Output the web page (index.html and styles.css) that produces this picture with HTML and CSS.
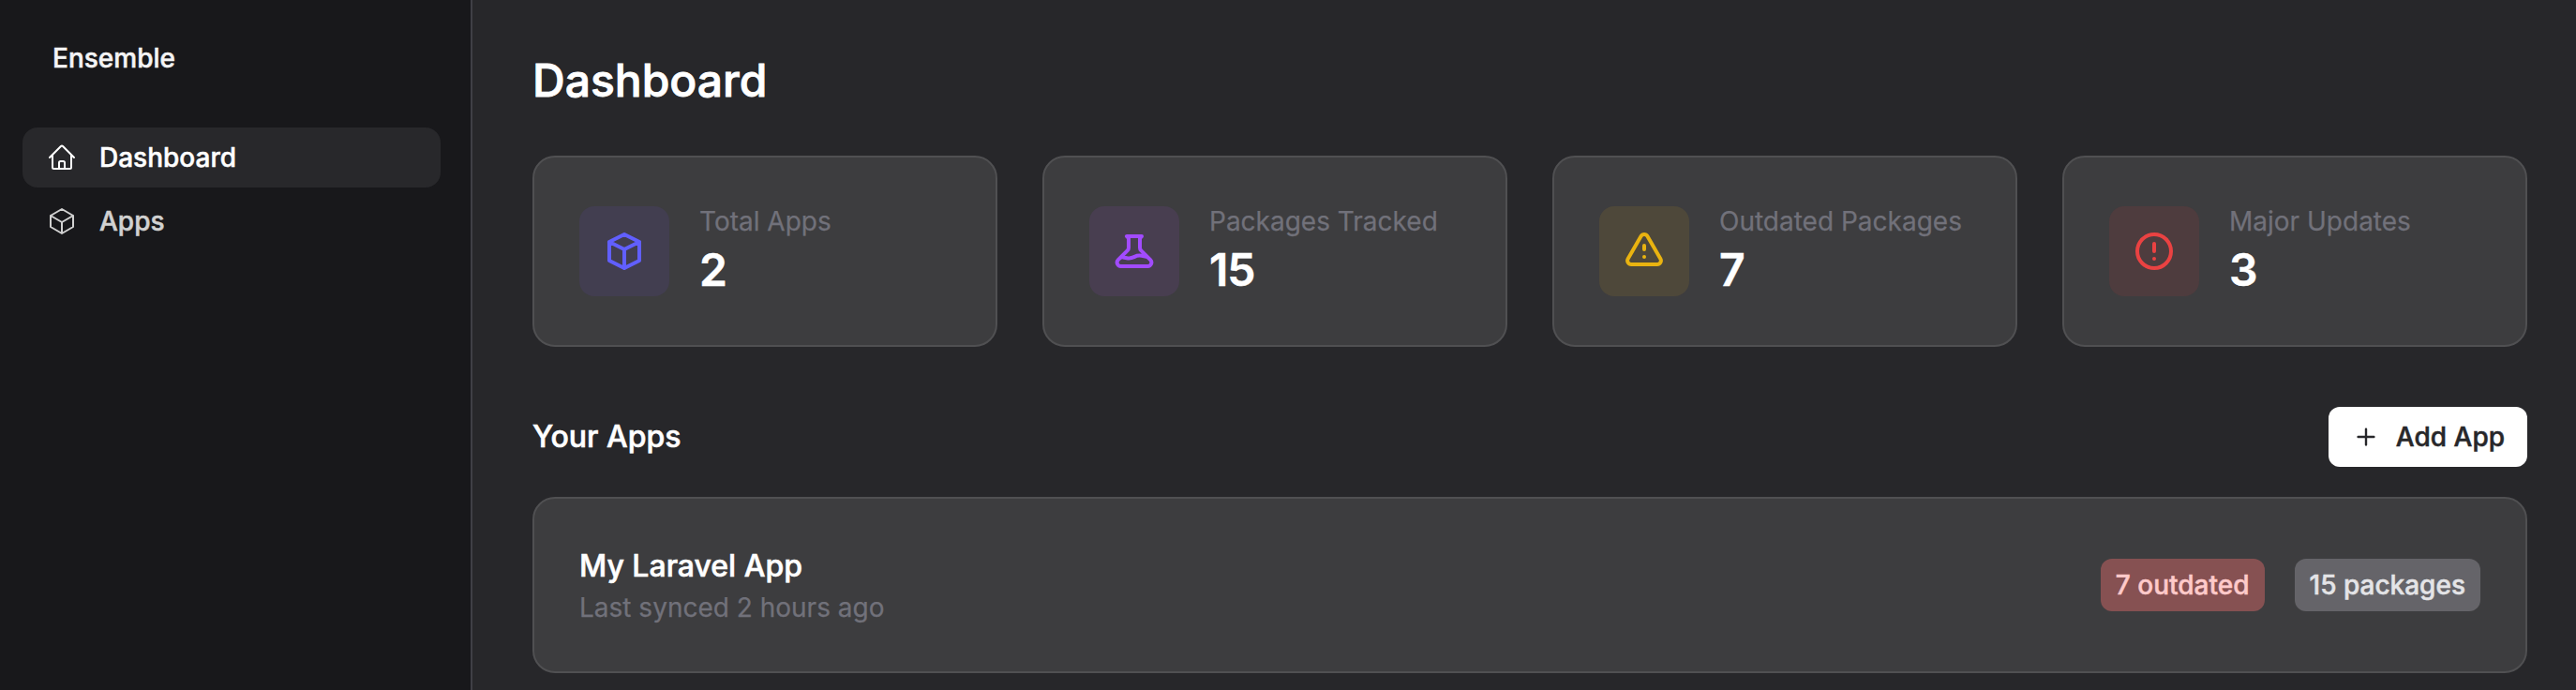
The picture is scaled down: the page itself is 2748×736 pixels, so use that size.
FILE: index.html
```html
<!DOCTYPE html>
<html lang="en">
<head>
<meta charset="utf-8">
<title>Dashboard - Ensemble</title>
<link rel="stylesheet" href="styles.css">
</head>
<body>
<div class="layout">
  <aside class="sidebar">
    <div class="brand">Ensemble</div>
    <nav class="nav">
      <a class="nav-item nav-item-current">
        <svg class="nav-icon" viewBox="0 0 24 24"><path d="m2.25 12 8.954-8.955c.44-.439 1.152-.439 1.591 0L21.75 12M4.5 9.75v10.125c0 .621.504 1.125 1.125 1.125H9.75v-4.875c0-.621.504-1.125 1.125-1.125h2.25c.621 0 1.125.504 1.125 1.125V21h4.125c.621 0 1.125-.504 1.125-1.125V9.75M8.25 21h8.25"/></svg>
        <span>Dashboard</span>
      </a>
      <a class="nav-item">
        <svg class="nav-icon" viewBox="0 0 24 24"><path d="m21 7.5-9-5.25L3 7.5m18 0-9 5.25m9-5.25v9l-9 5.25M3 7.5l9 5.25M3 7.5v9l9 5.25m0-9v9"/></svg>
        <span>Apps</span>
      </a>
    </nav>
  </aside>
  <main class="main">
    <h1 class="title">Dashboard</h1>
    <section class="stats">
      <div class="card stat">
        <div class="tile tile-indigo"><svg class="tile-icon" viewBox="0 0 24 24"><path d="M20 7l-8-4-8 4m16 0l-8 4m8-4v10l-8 4m0-10L4 7m8 4v10M4 7v10l8 4"/></svg></div>
        <div><div class="stat-label">Total Apps</div><div class="stat-value">2</div></div>
      </div>
      <div class="card stat">
        <div class="tile tile-purple"><svg class="tile-icon" viewBox="0 0 24 24"><path d="M19.428 15.428a2 2 0 00-1.022-.547l-2.387-.477a6 6 0 00-3.86.517l-.318.158a6 6 0 01-3.86.517L6.05 15.21a2 2 0 00-1.806.547M8 4h8l-1 1v5.172a2 2 0 00.586 1.414l5 5c1.26 1.26.367 3.414-1.415 3.414H4.828c-1.782 0-2.674-2.154-1.414-3.414l5-5A2 2 0 009 10.172V5L8 4z"/></svg></div>
        <div><div class="stat-label">Packages Tracked</div><div class="stat-value">15</div></div>
      </div>
      <div class="card stat">
        <div class="tile tile-yellow"><svg class="tile-icon" viewBox="0 0 24 24"><path d="M12 9v2m0 4h.01m-6.938 4h13.856c1.54 0 2.502-1.667 1.732-3L13.732 4c-.77-1.333-2.694-1.333-3.464 0L3.34 16c-.77 1.333.192 3 1.732 3z"/></svg></div>
        <div><div class="stat-label">Outdated Packages</div><div class="stat-value">7</div></div>
      </div>
      <div class="card stat">
        <div class="tile tile-red"><svg class="tile-icon" viewBox="0 0 24 24"><path d="M12 8v4m0 4h.01M21 12a9 9 0 11-18 0 9 9 0 0118 0z"/></svg></div>
        <div><div class="stat-label">Major Updates</div><div class="stat-value">3</div></div>
      </div>
    </section>
    <div class="section-head">
      <h2 class="subtitle">Your Apps</h2>
      <button class="button">
        <svg class="button-icon" viewBox="0 0 20 20"><path d="M10.75 4.75a.75.75 0 0 0-1.5 0v4.5h-4.5a.75.75 0 0 0 0 1.5h4.5v4.5a.75.75 0 0 0 1.5 0v-4.5h4.5a.75.75 0 0 0 0-1.5h-4.5v-4.5Z"/></svg>
        <span>Add App</span>
      </button>
    </div>
    <div class="card app">
      <div>
        <div class="app-name">My Laravel App</div>
        <div class="app-sync">Last synced 2 hours ago</div>
      </div>
      <div class="badges">
        <span class="badge badge-red">7 outdated</span>
        <span class="badge badge-zinc">15 packages</span>
      </div>
    </div>
  </main>
</div>
</body>
</html>
```
FILE: styles.css
```css
* { box-sizing: border-box; margin: 0; padding: 0; }
body { background: #27272a; color: #fff; font-family: Inter, sans-serif; font-size: 28px; line-height: 40px; }
svg { display: block; flex-shrink: 0; }
.layout { display: flex; height: 736px; overflow: hidden; }

/* Slightly heavier strokes for the medium weight */
.brand, .nav-item, .title, .subtitle, .button, .app-name, .badge { font-weight: 500; -webkit-text-stroke: 0.5px currentColor; }
.title { -webkit-text-stroke-width: 0.9px; }
.subtitle, .app-name { -webkit-text-stroke-width: 0.6px; }

.sidebar { width: 504px; flex-shrink: 0; padding: 32px 32px 32px 24px; background: #18181b; border-right: 2px solid #3f3f46; }
.brand { height: 60px; padding-left: 32px; line-height: 60px; color: #f4f4f5; }
.nav { display: flex; flex-direction: column; gap: 4px; margin-top: 44px; }
.nav-item { display: flex; align-items: center; gap: 24px; height: 64px; padding: 0 26px; border-radius: 16px; color: #d1d1d1; }
.nav-item-current { background: #28282b; color: #fff; }
.nav-icon { width: 32px; height: 32px; fill: none; stroke: currentColor; stroke-width: 1.5; stroke-linecap: round; stroke-linejoin: round; }

.main { flex: 1; padding: 57px 52px 0 64px; }
.title { height: 58px; font-size: 48px; line-height: 58px; }
.stats { display: grid; grid-template-columns: repeat(4, 1fr); gap: 48px; margin-top: 51px; }
.card { display: flex; align-items: center; padding: 48px; background: #3d3d3f; border: 2px solid #505052; border-radius: 24px; }
.stat { gap: 32px; }
.tile { display: flex; align-items: center; justify-content: center; width: 96px; height: 96px; border-radius: 16px; }
.tile-icon { width: 48px; height: 48px; fill: none; stroke: currentColor; stroke-width: 2; stroke-linecap: round; stroke-linejoin: round; }
.tile-indigo { background: #423e50; color: #615fff; }
.tile-purple { background: #483e50; color: #a24bff; }
.tile-yellow { background: #4e483a; color: #e9b310; }
.tile-red { background: #4e3c3e; color: #ea4242; }
.stat-label, .app-sync { color: #71717a; -webkit-text-stroke: 0.25px currentColor; }
.stat-value { font-size: 48px; font-weight: 600; line-height: 64px; letter-spacing: -1px; -webkit-text-stroke: 0.5px currentColor; }

.section-head { display: flex; align-items: center; justify-content: space-between; margin-top: 64px; }
.subtitle { font-size: 32px; line-height: 48px; }
.button { display: flex; align-items: center; gap: 16px; height: 64px; padding: 0 24px; background: #fff; border: 0; border-radius: 12px; color: #27272a; font: 500 28px/40px Inter, sans-serif; }
.button-icon { width: 32px; height: 32px; fill: currentColor; }

.app { justify-content: space-between; margin-top: 32px; }
.app-name { font-size: 32px; line-height: 48px; }
.badges { display: flex; gap: 32px; }
.badge { padding: 8px 16px; border-radius: 12px; }
.badge-red { background: #865152; color: #fecaca; }
.badge-zinc { background: #656469; color: #e4e4e7; }
```
